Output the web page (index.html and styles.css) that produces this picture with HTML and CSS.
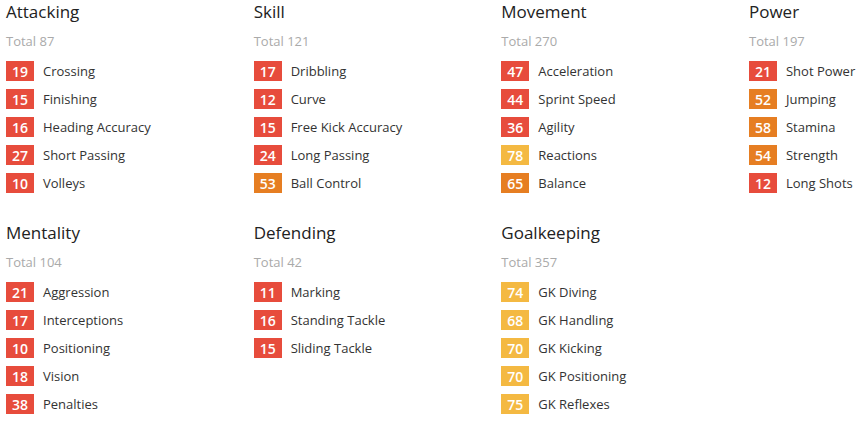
FILE: index.html
```html
<!DOCTYPE html>
<html>
<head>
<meta charset="utf-8">
<link rel="stylesheet" href="styles.css">
</head>
<body>
<div class="grid">
  <section class="card">
    <h5 class="title">Attacking</h5>
    <div class="total">Total 87</div>
    <ul class="list">
      <li><span class="val red">19</span>Crossing</li>
      <li><span class="val red">15</span>Finishing</li>
      <li><span class="val red">16</span>Heading Accuracy</li>
      <li><span class="val red">27</span>Short Passing</li>
      <li><span class="val red">10</span>Volleys</li>
    </ul>
  </section>
  <section class="card">
    <h5 class="title">Skill</h5>
    <div class="total">Total 121</div>
    <ul class="list">
      <li><span class="val red">17</span>Dribbling</li>
      <li><span class="val red">12</span>Curve</li>
      <li><span class="val red">15</span>Free Kick Accuracy</li>
      <li><span class="val red">24</span>Long Passing</li>
      <li><span class="val orange">53</span>Ball Control</li>
    </ul>
  </section>
  <section class="card">
    <h5 class="title">Movement</h5>
    <div class="total">Total 270</div>
    <ul class="list">
      <li><span class="val red">47</span>Acceleration</li>
      <li><span class="val red">44</span>Sprint Speed</li>
      <li><span class="val red">36</span>Agility</li>
      <li><span class="val yellow">78</span>Reactions</li>
      <li><span class="val orange">65</span>Balance</li>
    </ul>
  </section>
  <section class="card">
    <h5 class="title">Power</h5>
    <div class="total">Total 197</div>
    <ul class="list">
      <li><span class="val red">21</span>Shot Power</li>
      <li><span class="val orange">52</span>Jumping</li>
      <li><span class="val orange">58</span>Stamina</li>
      <li><span class="val orange">54</span>Strength</li>
      <li><span class="val red">12</span>Long Shots</li>
    </ul>
  </section>
  <section class="card">
    <h5 class="title">Mentality</h5>
    <div class="total">Total 104</div>
    <ul class="list">
      <li><span class="val red">21</span>Aggression</li>
      <li><span class="val red">17</span>Interceptions</li>
      <li><span class="val red">10</span>Positioning</li>
      <li><span class="val red">18</span>Vision</li>
      <li><span class="val red">38</span>Penalties</li>
    </ul>
  </section>
  <section class="card">
    <h5 class="title">Defending</h5>
    <div class="total">Total 42</div>
    <ul class="list">
      <li><span class="val red">11</span>Marking</li>
      <li><span class="val red">16</span>Standing Tackle</li>
      <li><span class="val red">15</span>Sliding Tackle</li>
    </ul>
  </section>
  <section class="card">
    <h5 class="title">Goalkeeping</h5>
    <div class="total">Total 357</div>
    <ul class="list">
      <li><span class="val yellow">74</span>GK Diving</li>
      <li><span class="val yellow">68</span>GK Handling</li>
      <li><span class="val yellow">70</span>GK Kicking</li>
      <li><span class="val yellow">70</span>GK Positioning</li>
      <li><span class="val yellow">75</span>GK Reflexes</li>
    </ul>
  </section>
</div>
</body>
</html>
```
FILE: styles.css
```css
html, body {
  margin: 0;
  padding: 0;
  background: #fff;
}
body {
  font-family: "Open Sans", "DejaVu Sans", sans-serif;
  color: #333;
  padding: 0 0 0 6px;
  overflow: hidden;
}
.grid {
  display: grid;
  grid-template-columns: repeat(3, 247.67px) 1fr;
  row-gap: 28px;
}
.card {
  display: flex;
  flex-direction: column;
  min-width: 0;
}
.title {
  margin: 0;
  font-size: 17px;
  font-weight: 400;
  line-height: 24px;
  color: #222;
}
.total {
  margin-top: 7px;
  font-size: 13px;
  line-height: 20px;
  color: #aaa;
}
.list {
  list-style: none;
  margin: 10px 0 0;
  padding: 0;
  display: flex;
  flex-direction: column;
  gap: 8px;
}
.list li {
  display: flex;
  align-items: center;
  height: 20px;
  font-size: 13px;
  color: #333;
  white-space: nowrap;
}
.val {
  display: inline-flex;
  align-items: center;
  justify-content: center;
  flex: none;
  width: 28px;
  height: 20px;
  margin-right: 9px;
  color: #fff;
  font-size: 14px;
  font-weight: 600;
}
.red { background: #e74c3c; }
.orange { background: #e67e22; }
.yellow { background: #f4b942; }
```
